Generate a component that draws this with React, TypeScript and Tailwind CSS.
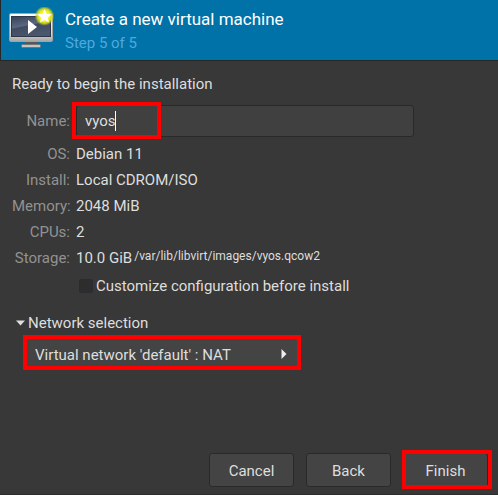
import React, { useState } from 'react';

const details = [
  { label: 'OS:', value: 'Debian 11' },
  { label: 'Install:', value: 'Local CDROM/ISO' },
  { label: 'Memory:', value: '2048 MiB' },
  { label: 'CPUs:', value: '2' },
  { label: 'Storage:', value: '10.0 GiB', path: '/var/lib/libvirt/images/vyos.qcow2' },
];

const MachineIcon: React.FC = () => (
  <svg width="48" height="48" viewBox="0 0 48 48" className="shrink-0" aria-hidden="true">
    <defs>
      <linearGradient id="bezel" x1="0" y1="0" x2="0" y2="1">
        <stop offset="0" stopColor="#ffffff" />
        <stop offset="0.7" stopColor="#d8d8d8" />
        <stop offset="1" stopColor="#a4a4a4" />
      </linearGradient>
      <linearGradient id="screen" x1="0" y1="0" x2="0.4" y2="1">
        <stop offset="0" stopColor="#364058" />
        <stop offset="0.5" stopColor="#5a6780" />
        <stop offset="0.55" stopColor="#404b61" />
        <stop offset="1" stopColor="#4a566c" />
      </linearGradient>
      <radialGradient id="glow">
        <stop offset="0" stopColor="#fff86a" />
        <stop offset="0.55" stopColor="#f2f01c" />
        <stop offset="0.75" stopColor="#d5dc18" stopOpacity="0.85" />
        <stop offset="1" stopColor="#a0c030" stopOpacity="0" />
      </radialGradient>
    </defs>
    <path d="M19 35h11l1 4H18z" fill="#55595c" />
    <rect x="14.500" y="37.500" width="19" height="3" rx="1" fill="#c4c4c4" stroke="#747474" />
    <rect x="2.500" y="6.500" width="43" height="28" rx="1.500" fill="url(#bezel)" stroke="#a3a3a3" />
    <rect x="4.500" y="9.500" width="39" height="20" fill="url(#screen)" stroke="#303848" />
    <path d="M21 13v14l9-7z" fill="#fff" />
    <circle cx="37.500" cy="9" r="10" fill="url(#glow)" />
    <path d="M37.500 2l2 4.800 5.200.4-4 3.400 1.300 5-4.500-2.700-4.500 2.700 1.300-5-4-3.400 5.200-.4z" fill="#fff" />
  </svg>
);

const buttonClass =
  'h-[34px] w-[85px] rounded-[3px] border border-[#292929] bg-[#444444] pt-px text-center text-[#dedede]';

const App: React.FC = () => {
  const [name, setName] = useState('vyos');

  return (
    <div className="flex min-h-screen flex-col border-b border-[#2d2d2d] bg-[#383838] font-['Roboto','Liberation_Sans',sans-serif] text-[15px] leading-6 text-[#dedede]">
      <header className="flex h-[61px] shrink-0 items-start border-b border-l border-[#272727] bg-[#0072a8] pt-[7px] pl-1.5">
        <MachineIcon />
        <div className="ml-2.5">
          <h1 className="text-[17px] text-white">Create a new virtual machine</h1>
          <p className="text-[#4fa9df]">Step 5 of 5</p>
        </div>
      </header>

      <main className="px-3 pt-[11px]">
        <p>Ready to begin the installation</p>

        <div className="mt-[9px] flex items-center gap-1.5">
          <label htmlFor="name" className="w-[58px] shrink-0 text-right text-[#929292]">Name:</label>
          <div className="relative w-full max-w-[338px]">
            <input
              id="name"
              value={name}
              onChange={(e) => setName(e.target.value)}
              className="block h-8 w-full rounded-[3px] border border-[#292929] bg-[#404040] px-2 text-[#dedede] caret-transparent outline-none"
            />
            {/* Text cursor */}
            <span className="pointer-events-none absolute inset-y-1.5 left-[39px] w-px bg-white" />
            <span className="pointer-events-none absolute -top-[3px] -left-1 h-[37px] w-[89px] border-4 border-[#ff0000]" />
          </div>
        </div>

        <dl className="mt-1">
          {details.map((row) => (
            <div key={row.label} className="flex h-[26px] items-center gap-1.5">
              <dt className="w-[58px] shrink-0 text-right text-[#929292]">{row.label}</dt>
              <dd className="flex gap-0.5">
                {row.value}
                {row.path && <span className="text-xs leading-5">{row.path}</span>}
              </dd>
            </div>
          ))}
        </dl>

        <label className="flex h-[30px] items-center gap-[3px] pl-[67px]">
          <input
            type="checkbox"
            className="size-3.5 appearance-none rounded-[2px] border border-[#2b2b35] bg-[#2d2d2d] checked:bg-[#0072a8]"
          />
          Customize configuration before install
        </label>

        <details open className="group mt-2.5">
          <summary className="flex list-none items-center gap-[3px] pl-1">
            <svg width="9" height="6" viewBox="0 0 9 6" aria-hidden="true">
              <path d="M0 0.500h9L4.500 5.500z" fill="#dedede" />
            </svg>
            Network selection
          </summary>
          <div className="relative ml-[11px] w-[278px] max-w-full border-4 border-[#ff0000]">
            <select
              aria-label="Network"
              className="block h-[27px] w-full appearance-none bg-[#444444] pt-1 pl-2 text-[#dedede] outline-none"
            >
              <option>Virtual network 'default' : NAT</option>
            </select>
            <svg
              width="6"
              height="10"
              viewBox="0 0 6 10"
              className="pointer-events-none absolute top-2.5 right-2.5"
              aria-hidden="true"
            >
              <path d="M0.500 0v10L5.500 5z" fill="#eeeeee" />
            </svg>
          </div>
        </details>
      </main>

      <footer className="mt-auto flex justify-end gap-3 pr-2.5 pb-[7px]">
        <button type="button" className={buttonClass}>Cancel</button>
        <button type="button" className={buttonClass}>Back</button>
        <div className="relative">
          <button type="button" className={buttonClass}>Finish</button>
          <span className="pointer-events-none absolute -top-[3px] -right-1 -bottom-0.5 -left-px border-4 border-[#ff0000]" />
        </div>
      </footer>
    </div>
  );
};

export default App;
